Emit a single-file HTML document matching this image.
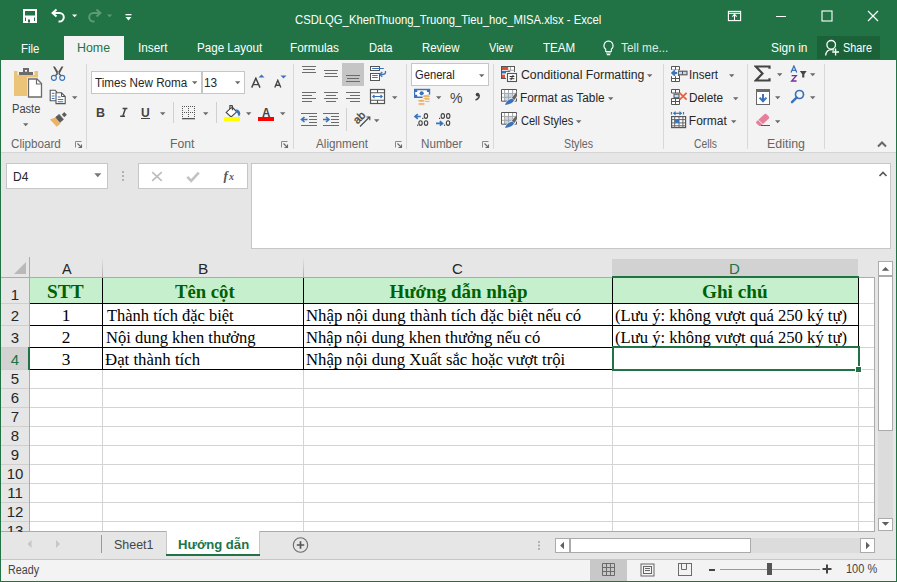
<!DOCTYPE html>
<html><head><meta charset="utf-8"><style>
html,body{margin:0;padding:0;overflow:hidden;background:#fff}
#w{position:relative;width:897px;height:582px;overflow:hidden;font-family:"Liberation Sans",sans-serif}
#w div,#w span,#w svg{position:absolute;box-sizing:border-box}
#w span{white-space:pre;line-height:normal}
</style></head><body><div id="w">
<div style="left:0px;top:0px;width:897px;height:582px;background:#217346"></div>
<div style="left:1px;top:60px;width:895px;height:92px;background:#f3f3f3"></div>
<div style="left:1px;top:152px;width:895px;height:1px;background:#d5d5d5"></div>
<div style="left:1px;top:153px;width:895px;height:104px;background:#e6e6e6"></div>
<div style="left:64px;top:36px;width:60px;height:24px;background:#f3f3f3"></div>
<div style="left:817px;top:36px;width:63px;height:23px;background:#1c6239"></div>
<span style="left:294.86px;top:13.34px;font-family:'Liberation Sans',sans-serif;font-size:12px;font-weight:normal;font-style:normal;color:#fff;transform:scaleX(0.9395);transform-origin:0 0;">CSDLQG_KhenThuong_Truong_Tieu_hoc_MISA.xlsx - Excel</span>
<svg style="left:22px;top:8px;" width="16" height="16" viewBox="0 0 16 16"><path d="M2 2 H14 V14 H2 Z" fill="none" stroke="#fff" stroke-width="2"/><rect x="2" y="7.5" width="12" height="2" fill="#fff"/><rect x="4" y="9" width="8" height="5" fill="#fff"/><rect x="6" y="11.5" width="2" height="3" fill="#217346"/></svg>
<svg style="left:50px;top:8px;" width="18" height="16" viewBox="0 0 18 16"><path d="M2.5 5 H9.5 A4.3 4.3 0 0 1 9.5 13.6 H8.5" fill="none" stroke="#fff" stroke-width="2"/><path d="M6.5 1.5 L2.6 5 L6.5 8.5" fill="none" stroke="#fff" stroke-width="2"/></svg>
<svg style="left:72px;top:14px;" width="6" height="4" viewBox="0 0 6 4"><path d="M0 0.5 H5.2 L2.6 3.3 Z" fill="#fff"/></svg>
<svg style="left:85px;top:8px;" width="18" height="16" viewBox="0 0 18 16"><path d="M15.5 5 H8.5 A4.3 4.3 0 0 0 8.5 13.6 H9.5" fill="none" stroke="#5d9b78" stroke-width="2"/><path d="M11.5 1.5 L15.4 5 L11.5 8.5" fill="none" stroke="#5d9b78" stroke-width="2"/></svg>
<svg style="left:107px;top:14px;" width="6" height="4" viewBox="0 0 6 4"><path d="M0 0.5 H5.2 L2.6 3.3 Z" fill="#5d9b78"/></svg>
<svg style="left:125px;top:13px;" width="7" height="9" viewBox="0 0 7 9"><rect x="0.5" y="1" width="6" height="1.3" fill="#fff"/><path d="M0.5 4 H6.5 L3.5 7.5 Z" fill="#fff"/></svg>
<svg style="left:727px;top:10px;" width="15" height="12" viewBox="0 0 15 12"><rect x="1.4" y="1.4" width="12.2" height="9.2" fill="none" stroke="#fff" stroke-width="1.1"/><path d="M1.4 3.3 H13.6" stroke="#fff" stroke-width="1.1"/><path d="M7.5 3.8 V10.6 M5.3 6.6 L7.5 4.4 L9.7 6.6" fill="none" stroke="#fff" stroke-width="1.1"/></svg>
<div style="left:776px;top:16px;width:10px;height:1px;background:#fff"></div>
<svg style="left:821px;top:10px;" width="12" height="12" viewBox="0 0 12 12"><rect x="1" y="1" width="10" height="10" fill="none" stroke="#fff" stroke-width="1.1"/></svg>
<svg style="left:867px;top:10px;" width="12" height="12" viewBox="0 0 12 12"><path d="M1 1 L11 11 M11 1 L1 11" stroke="#fff" stroke-width="1.2"/></svg>
<span style="left:21.46px;top:42.04px;font-family:'Liberation Sans',sans-serif;font-size:12px;font-weight:normal;font-style:normal;color:#fff;transform:scaleX(0.9462);transform-origin:0 0;">File</span>
<span style="left:77.37px;top:41.04px;font-family:'Liberation Sans',sans-serif;font-size:12px;font-weight:normal;font-style:normal;color:#217346;transform:scaleX(1.0328);transform-origin:0 0;">Home</span>
<span style="left:138.21px;top:41.04px;font-family:'Liberation Sans',sans-serif;font-size:12px;font-weight:normal;font-style:normal;color:#fff;transform:scaleX(0.9797);transform-origin:0 0;">Insert</span>
<span style="left:196.63px;top:41.04px;font-family:'Liberation Sans',sans-serif;font-size:12px;font-weight:normal;font-style:normal;color:#fff;transform:scaleX(0.9668);transform-origin:0 0;">Page Layout</span>
<span style="left:290.42px;top:41.04px;font-family:'Liberation Sans',sans-serif;font-size:12px;font-weight:normal;font-style:normal;color:#fff;transform:scaleX(0.9796);transform-origin:0 0;">Formulas</span>
<span style="left:368.67px;top:41.04px;font-family:'Liberation Sans',sans-serif;font-size:12px;font-weight:normal;font-style:normal;color:#fff;transform:scaleX(0.9254);transform-origin:0 0;">Data</span>
<span style="left:422.27px;top:41.04px;font-family:'Liberation Sans',sans-serif;font-size:12px;font-weight:normal;font-style:normal;color:#fff;transform:scaleX(0.9502);transform-origin:0 0;">Review</span>
<span style="left:488.60px;top:41.04px;font-family:'Liberation Sans',sans-serif;font-size:12px;font-weight:normal;font-style:normal;color:#fff;transform:scaleX(0.9161);transform-origin:0 0;">View</span>
<span style="left:542.59px;top:41.04px;font-family:'Liberation Sans',sans-serif;font-size:12px;font-weight:normal;font-style:normal;color:#fff;transform:scaleX(0.9629);transform-origin:0 0;">TEAM</span>
<span style="left:621.40px;top:41.04px;font-family:'Liberation Sans',sans-serif;font-size:12px;font-weight:normal;font-style:normal;color:#dfe8e2;transform:scaleX(0.9873);transform-origin:0 0;">Tell me...</span>
<span style="left:770.61px;top:41.04px;font-family:'Liberation Sans',sans-serif;font-size:12px;font-weight:normal;font-style:normal;color:#fff;transform:scaleX(0.9946);transform-origin:0 0;">Sign in</span>
<span style="left:842.50px;top:41.04px;font-family:'Liberation Sans',sans-serif;font-size:12px;font-weight:normal;font-style:normal;color:#fff;transform:scaleX(0.9032);transform-origin:0 0;">Share</span>
<svg style="left:602px;top:40px;" width="13" height="16" viewBox="0 0 13 16"><path d="M6.5 1 A4.6 4.6 0 0 1 9.3 9.2 V11.5 H3.7 V9.2 A4.6 4.6 0 0 1 6.5 1 Z" fill="none" stroke="#fff" stroke-width="1.1"/><path d="M4 13 H9 M4.8 14.6 H8.2" stroke="#fff" stroke-width="1.1"/></svg>
<svg style="left:823px;top:38px;" width="18" height="19" viewBox="0 0 18 19"><circle cx="8.2" cy="6.8" r="4.3" fill="none" stroke="#fff" stroke-width="1.3"/><path d="M2.6 17.5 C3 13.8 5.5 11.6 8.6 11.6 C9.6 11.6 10.5 11.8 11.3 12.2" fill="none" stroke="#fff" stroke-width="1.3"/><path d="M12.6 10.6 V17.4 M9.2 14 H16" stroke="#fff" stroke-width="1.3"/></svg>
<div style="left:86px;top:64px;width:1px;height:85px;background:#d8d8d8"></div>
<div style="left:293px;top:64px;width:1px;height:85px;background:#d8d8d8"></div>
<div style="left:406px;top:64px;width:1px;height:85px;background:#d8d8d8"></div>
<div style="left:493px;top:64px;width:1px;height:85px;background:#d8d8d8"></div>
<div style="left:663px;top:64px;width:1px;height:85px;background:#d8d8d8"></div>
<div style="left:747px;top:64px;width:1px;height:85px;background:#d8d8d8"></div>
<div style="left:824px;top:64px;width:1px;height:85px;background:#d8d8d8"></div>
<span style="left:10.81px;top:136.94px;font-family:'Liberation Sans',sans-serif;font-size:12px;font-weight:normal;font-style:normal;color:#666666;transform:scaleX(0.9684);transform-origin:0 0;">Clipboard</span>
<span style="left:170.39px;top:136.94px;font-family:'Liberation Sans',sans-serif;font-size:12px;font-weight:normal;font-style:normal;color:#666666;transform:scaleX(1.0175);transform-origin:0 0;">Font</span>
<span style="left:315.60px;top:136.94px;font-family:'Liberation Sans',sans-serif;font-size:12px;font-weight:normal;font-style:normal;color:#666666;transform:scaleX(0.9739);transform-origin:0 0;">Alignment</span>
<span style="left:421.43px;top:136.94px;font-family:'Liberation Sans',sans-serif;font-size:12px;font-weight:normal;font-style:normal;color:#666666;transform:scaleX(0.9716);transform-origin:0 0;">Number</span>
<span style="left:563.91px;top:136.94px;font-family:'Liberation Sans',sans-serif;font-size:12px;font-weight:normal;font-style:normal;color:#666666;transform:scaleX(0.8904);transform-origin:0 0;">Styles</span>
<span style="left:694.09px;top:136.94px;font-family:'Liberation Sans',sans-serif;font-size:12px;font-weight:normal;font-style:normal;color:#666666;transform:scaleX(0.8593);transform-origin:0 0;">Cells</span>
<span style="left:766.97px;top:136.94px;font-family:'Liberation Sans',sans-serif;font-size:12px;font-weight:normal;font-style:normal;color:#666666;transform:scaleX(1.0346);transform-origin:0 0;">Editing</span>
<svg style="left:75px;top:141px;" width="8" height="8" viewBox="0 0 8 8"><path d="M0.5 6.5 V0.5 H6.5" fill="none" stroke="#8a8a8a" stroke-width="1"/><path d="M2.5 2.5 L6.5 6.5 M3.5 6.5 H6.5 V3.5" fill="none" stroke="#6a6a6a" stroke-width="1.1"/></svg>
<svg style="left:281px;top:141px;" width="8" height="8" viewBox="0 0 8 8"><path d="M0.5 6.5 V0.5 H6.5" fill="none" stroke="#8a8a8a" stroke-width="1"/><path d="M2.5 2.5 L6.5 6.5 M3.5 6.5 H6.5 V3.5" fill="none" stroke="#6a6a6a" stroke-width="1.1"/></svg>
<svg style="left:395px;top:141px;" width="8" height="8" viewBox="0 0 8 8"><path d="M0.5 6.5 V0.5 H6.5" fill="none" stroke="#8a8a8a" stroke-width="1"/><path d="M2.5 2.5 L6.5 6.5 M3.5 6.5 H6.5 V3.5" fill="none" stroke="#6a6a6a" stroke-width="1.1"/></svg>
<svg style="left:482px;top:141px;" width="8" height="8" viewBox="0 0 8 8"><path d="M0.5 6.5 V0.5 H6.5" fill="none" stroke="#8a8a8a" stroke-width="1"/><path d="M2.5 2.5 L6.5 6.5 M3.5 6.5 H6.5 V3.5" fill="none" stroke="#6a6a6a" stroke-width="1.1"/></svg>
<svg style="left:877px;top:140px;" width="10" height="8" viewBox="0 0 10 8"><path d="M1 6.5 L5 2.5 L9 6.5" fill="none" stroke="#666" stroke-width="2"/></svg>
<svg style="left:13px;top:67px;" width="31" height="32" viewBox="0 0 31 32"><rect x="1" y="4" width="24" height="25" fill="#ebc47a"/><rect x="4.5" y="3" width="17" height="5" fill="#f3f3f3"/><rect x="6" y="5" width="14" height="3" fill="#6b6b6b"/><rect x="10" y="1" width="6" height="5" fill="#6b6b6b"/><rect x="12" y="3" width="2" height="1.6" fill="#fff"/><path d="M14 10.5 H24.5 L30 16 V31.5 H14 Z" fill="#f3f3f3"/><path d="M15.5 12 H24 L28.5 16.5 V30 H15.5 Z" fill="#fff" stroke="#6b6b6b" stroke-width="1.3"/><path d="M23.5 12 V17 H28.5" fill="none" stroke="#6b6b6b" stroke-width="1.2"/></svg>
<span style="left:12.08px;top:102.14px;font-family:'Liberation Sans',sans-serif;font-size:12px;font-weight:normal;font-style:normal;color:#444;transform:scaleX(0.9247);transform-origin:0 0;">Paste</span>
<svg style="left:22.5px;top:123px;" width="6" height="4" viewBox="0 0 6 4"><path d="M0 0.3 H5.4 L2.7 3.2 Z" fill="#6b6b6b"/></svg>
<svg style="left:49px;top:65px;" width="18" height="17" viewBox="0 0 18 17"><path d="M4 1.6 L5.9 1.6 L10 8.3 L8.2 9.6 Z M14.4 1.6 L12.5 1.6 L8.4 8.3 L10.2 9.6 Z" fill="#555"/><path d="M8.4 8.5 L6.2 11 M10 8.5 L12.2 11" stroke="#555" stroke-width="1.3"/><circle cx="4.9" cy="12.8" r="2.5" fill="none" stroke="#3a73b9" stroke-width="1.15"/><circle cx="13.2" cy="12.8" r="2.5" fill="none" stroke="#3a73b9" stroke-width="1.15"/></svg>
<svg style="left:49px;top:89px;" width="17" height="16" viewBox="0 0 17 16"><path d="M1.2 1.2 H6 L7.6 2.8 V11.7 H1.2 Z" fill="#fff" stroke="#555" stroke-width="1.1"/><path d="M2.8 4.3 H5.5 M2.8 7 H5.5 M2.8 9.5 H5.5" stroke="#3a73b9" stroke-width="1"/><path d="M7 3.8 H12.5 L16.2 7.5 V14.6 H7 Z" fill="#fff" stroke="#555" stroke-width="1.1"/><path d="M12.5 3.8 V7.5 H16.2" fill="none" stroke="#555" stroke-width="1"/><path d="M8.8 8 H11.5 M8.8 10.5 H14.2 M8.8 12.8 H14.2" stroke="#3a73b9" stroke-width="1.1"/></svg>
<svg style="left:72px;top:96px;" width="6" height="4" viewBox="0 0 6 4"><path d="M0 0.3 H5.4 L2.7 3.2 Z" fill="#6b6b6b"/></svg>
<svg style="left:49px;top:112px;" width="18" height="16" viewBox="0 0 18 16"><path d="M1 7.4 L7.5 5 L11.7 11.4 L7.7 14.8 Z" fill="#eab366"/><path d="M6.8 5.2 L10.2 2.4 L14.4 7.4 L11 10.2 Z" fill="#5a5a5a" stroke="#5a5a5a" stroke-width="0.8" stroke-linejoin="round"/><path d="M13.2 2.4 L15.4 0.6 L17.4 3 L15.2 4.8 Z" fill="#5a5a5a" stroke="#5a5a5a" stroke-width="0.8" stroke-linejoin="round"/></svg>
<div style="left:91px;top:71px;width:111px;height:23px;background:#fff;border:1px solid #c6c6c6"></div>
<div style="left:202px;top:71px;width:43px;height:23px;background:#fff;border:1px solid #c6c6c6"></div>
<span style="left:95.20px;top:76.14px;font-family:'Liberation Sans',sans-serif;font-size:12px;font-weight:normal;font-style:normal;color:#262626;transform:scaleX(0.9726);transform-origin:0 0;">Times New Roma</span>
<svg style="left:192px;top:81px;" width="6" height="4" viewBox="0 0 6 4"><path d="M0 0.3 H5.4 L2.7 3.2 Z" fill="#6b6b6b"/></svg>
<span style="left:203.64px;top:76.14px;font-family:'Liberation Sans',sans-serif;font-size:12px;font-weight:normal;font-style:normal;color:#262626;transform:scaleX(0.9862);transform-origin:0 0;">13</span>
<svg style="left:235px;top:81px;" width="6" height="4" viewBox="0 0 6 4"><path d="M0 0.3 H5.4 L2.7 3.2 Z" fill="#6b6b6b"/></svg>
<svg style="left:250px;top:77px;" width="12" height="12" viewBox="0 0 12 12"><path d="M1.7 10.6 L5.85 1.2 L10 10.6 M3.3 7.6 H8.4" fill="none" stroke="#444" stroke-width="1.45"/></svg>
<svg style="left:258px;top:74px;" width="7" height="4" viewBox="0 0 7 4"><path d="M0.5 3.5 L3.5 0.5 L6.5 3.5 Z" fill="#3a73b9"/></svg>
<svg style="left:273px;top:79px;" width="10" height="10" viewBox="0 0 10 10"><path d="M1.8 8.6 L4.8 1.3 L7.8 8.6 M2.9 6.2 H6.7" fill="none" stroke="#444" stroke-width="1.35"/></svg>
<svg style="left:280px;top:75px;" width="7" height="4" viewBox="0 0 7 4"><path d="M0.5 0.5 H6.5 L3.5 3.5 Z" fill="#3a73b9"/></svg>
<span style="left:96.23px;top:105.03px;font-family:'Liberation Sans',sans-serif;font-size:13px;font-weight:bold;font-style:normal;color:#444;transform:scaleX(0.9562);transform-origin:0 0;">B</span>
<svg style="left:119px;top:107px;" width="10" height="11" viewBox="0 0 10 11"><path d="M3.6 1.6 H8.4 M1.2 9.2 H6 M6.4 1.6 L3.8 9.2" stroke="#444" stroke-width="1.5"/></svg>
<span style="left:141.01px;top:105.03px;font-family:'Liberation Sans',sans-serif;font-size:13px;font-weight:bold;font-style:normal;color:#444;transform:scaleX(0.9309);transform-origin:0 0;">U</span>
<div style="left:141px;top:118px;width:9px;height:1px;background:#444"></div>
<svg style="left:160px;top:112px;" width="6" height="4" viewBox="0 0 6 4"><path d="M0 0.3 H5.4 L2.7 3.2 Z" fill="#6b6b6b"/></svg>
<div style="left:173px;top:102px;width:1px;height:21px;background:#d0d0d0"></div>
<svg style="left:181px;top:105px;" width="15" height="15" viewBox="0 0 15 15"><rect x="1" y="1" width="1" height="1" fill="#555"/><rect x="3" y="1" width="1" height="1" fill="#555"/><rect x="5" y="1" width="1" height="1" fill="#555"/><rect x="7" y="1" width="1" height="1" fill="#555"/><rect x="9" y="1" width="1" height="1" fill="#555"/><rect x="11" y="1" width="1" height="1" fill="#555"/><rect x="13" y="1" width="1" height="1" fill="#555"/><rect x="1" y="3" width="1" height="1" fill="#555"/><rect x="7" y="3" width="1" height="1" fill="#555"/><rect x="13" y="3" width="1" height="1" fill="#555"/><rect x="1" y="5" width="1" height="1" fill="#555"/><rect x="7" y="5" width="1" height="1" fill="#555"/><rect x="13" y="5" width="1" height="1" fill="#555"/><rect x="1" y="7" width="1" height="1" fill="#555"/><rect x="3" y="7" width="1" height="1" fill="#555"/><rect x="5" y="7" width="1" height="1" fill="#555"/><rect x="7" y="7" width="1" height="1" fill="#555"/><rect x="9" y="7" width="1" height="1" fill="#555"/><rect x="11" y="7" width="1" height="1" fill="#555"/><rect x="13" y="7" width="1" height="1" fill="#555"/><rect x="1" y="9" width="1" height="1" fill="#555"/><rect x="7" y="9" width="1" height="1" fill="#555"/><rect x="13" y="9" width="1" height="1" fill="#555"/><rect x="1" y="11" width="1" height="1" fill="#555"/><rect x="7" y="11" width="1" height="1" fill="#555"/><rect x="13" y="11" width="1" height="1" fill="#555"/><rect x="1" y="13" width="13" height="1.3" fill="#555"/></svg>
<svg style="left:203px;top:112px;" width="6" height="4" viewBox="0 0 6 4"><path d="M0 0.3 H5.4 L2.7 3.2 Z" fill="#6b6b6b"/></svg>
<div style="left:216px;top:102px;width:1px;height:21px;background:#d0d0d0"></div>
<svg style="left:223px;top:104px;" width="18" height="18" viewBox="0 0 18 18"><path d="M6.9 4.9 L3.2 8.4 L8.1 12.9 L13.7 7.8 L9.4 3.3 Z" fill="#fff" stroke="#444" stroke-width="1.1"/><path d="M6.9 5 V1.6 H9 L9.8 2.4 M9.4 2 V6.2" fill="none" stroke="#444" stroke-width="1.1"/><path d="M13.3 5.3 C15.5 5.6 17.3 7.3 17.3 9.5 C17.3 10.7 16.6 11.8 15.6 12.6 C15.3 10.6 14.8 9 13 8 Z" fill="#3a73b9"/><rect x="1" y="13" width="16" height="4" fill="#ffff00"/></svg>
<svg style="left:246px;top:112px;" width="6" height="4" viewBox="0 0 6 4"><path d="M0 0.3 H5.4 L2.7 3.2 Z" fill="#6b6b6b"/></svg>
<span style="left:262.20px;top:104.83px;font-family:'Liberation Sans',sans-serif;font-size:13px;font-weight:bold;font-style:normal;color:#444;transform:scaleX(0.8889);transform-origin:0 0;">A</span>
<div style="left:258px;top:117px;width:16px;height:4px;background:#ff0000"></div>
<svg style="left:280px;top:112px;" width="6" height="4" viewBox="0 0 6 4"><path d="M0 0.3 H5.4 L2.7 3.2 Z" fill="#6b6b6b"/></svg>
<div style="left:302px;top:66px;width:14px;height:1px;background:#6b6b6b"></div>
<div style="left:303px;top:69px;width:12px;height:1px;background:#6b6b6b"></div>
<div style="left:302px;top:72px;width:14px;height:1px;background:#6b6b6b"></div>
<div style="left:324px;top:70px;width:14px;height:1px;background:#6b6b6b"></div>
<div style="left:325px;top:73px;width:12px;height:1px;background:#6b6b6b"></div>
<div style="left:324px;top:76px;width:14px;height:1px;background:#6b6b6b"></div>
<div style="left:342px;top:63px;width:22px;height:23px;background:#c5c5c5"></div>
<div style="left:346px;top:75px;width:14px;height:1px;background:#6b6b6b"></div>
<div style="left:347px;top:78px;width:12px;height:1px;background:#6b6b6b"></div>
<div style="left:346px;top:81px;width:14px;height:1px;background:#6b6b6b"></div>
<div style="left:302px;top:92px;width:14px;height:1px;background:#6b6b6b"></div>
<div style="left:302px;top:95px;width:10px;height:1px;background:#6b6b6b"></div>
<div style="left:302px;top:98px;width:14px;height:1px;background:#6b6b6b"></div>
<div style="left:302px;top:101px;width:10px;height:1px;background:#6b6b6b"></div>
<div style="left:324px;top:92px;width:14px;height:1px;background:#6b6b6b"></div>
<div style="left:326px;top:95px;width:10px;height:1px;background:#6b6b6b"></div>
<div style="left:324px;top:98px;width:14px;height:1px;background:#6b6b6b"></div>
<div style="left:326px;top:101px;width:10px;height:1px;background:#6b6b6b"></div>
<div style="left:346px;top:92px;width:14px;height:1px;background:#6b6b6b"></div>
<div style="left:350px;top:95px;width:10px;height:1px;background:#6b6b6b"></div>
<div style="left:346px;top:98px;width:14px;height:1px;background:#6b6b6b"></div>
<div style="left:350px;top:101px;width:10px;height:1px;background:#6b6b6b"></div>
<svg style="left:369px;top:65px;" width="18" height="17" viewBox="0 0 18 17"><rect x="1.5" y="1.5" width="9" height="4" fill="#fff" stroke="#555" stroke-width="1"/><path d="M3.2 3.5 H14.8" stroke="#3a73b9" stroke-width="1"/><rect x="1.5" y="8.5" width="9" height="7" fill="#fff" stroke="#555" stroke-width="1"/><path d="M3.2 10.5 H8.7 M3.2 12.5 H8.7" stroke="#3a73b9" stroke-width="1"/><path d="M16.5 6.1 V7.6 C16.5 8.9 15.3 9.5 13 9.5 H11.2" fill="none" stroke="#3a73b9" stroke-width="1.3"/><path d="M13.3 7.1 L10.7 9.5 L13.3 11.8" fill="none" stroke="#3a73b9" stroke-width="1.3"/></svg>
<svg style="left:369px;top:88px;" width="17" height="17" viewBox="0 0 17 17"><rect x="1.5" y="1.5" width="14" height="14" fill="#fff" stroke="#555" stroke-width="1.2"/><path d="M1.5 4.8 H15.5 M1.5 12.2 H15.5 M8.5 1.5 V4.8 M8.5 12.2 V15.5" stroke="#555" stroke-width="1.1"/><path d="M4 8.5 H13" stroke="#3a73b9" stroke-width="1.1"/><path d="M5.5 7 L3.8 8.5 L5.5 10 M11.5 7 L13.2 8.5 L11.5 10" fill="none" stroke="#3a73b9" stroke-width="1.1"/></svg>
<svg style="left:392px;top:96px;" width="6" height="4" viewBox="0 0 6 4"><path d="M0 0.3 H5.4 L2.7 3.2 Z" fill="#6b6b6b"/></svg>
<div style="left:301px;top:113px;width:16px;height:1px;background:#6b6b6b"></div>
<div style="left:309px;top:116px;width:8px;height:1px;background:#6b6b6b"></div>
<div style="left:309px;top:119px;width:8px;height:1px;background:#6b6b6b"></div>
<div style="left:309px;top:122px;width:8px;height:1px;background:#6b6b6b"></div>
<div style="left:301px;top:125px;width:16px;height:1px;background:#6b6b6b"></div>
<svg style="left:300px;top:116px;" width="8" height="7" viewBox="0 0 8 7"><path d="M7.5 3.5 H2 M4.5 1 L1.5 3.5 L4.5 6" fill="none" stroke="#3a73b9" stroke-width="1.6"/></svg>
<div style="left:323px;top:113px;width:16px;height:1px;background:#6b6b6b"></div>
<div style="left:331px;top:116px;width:8px;height:1px;background:#6b6b6b"></div>
<div style="left:331px;top:119px;width:8px;height:1px;background:#6b6b6b"></div>
<div style="left:331px;top:122px;width:8px;height:1px;background:#6b6b6b"></div>
<div style="left:323px;top:125px;width:16px;height:1px;background:#6b6b6b"></div>
<svg style="left:322px;top:116px;" width="9" height="7" viewBox="0 0 9 7"><path d="M1 3.5 H6.5 M4 1 L7 3.5 L4 6" fill="none" stroke="#3a73b9" stroke-width="1.6"/></svg>
<div style="left:346px;top:108px;width:1px;height:23px;background:#d0d0d0"></div>
<svg style="left:352px;top:111px;" width="20" height="17" viewBox="0 0 20 17"><text x="0" y="0" transform="translate(5.5,13.5) rotate(-45)" font-family="Liberation Sans" font-size="11" fill="#444" stroke="#444" stroke-width="0.35">ab</text><path d="M8 15.5 L17.5 6" stroke="#444" stroke-width="1.1"/><path d="M14.5 6 H17.8 V9.3" fill="none" stroke="#444" stroke-width="1.1"/></svg>
<svg style="left:374px;top:119px;" width="6" height="4" viewBox="0 0 6 4"><path d="M0 0.3 H5.4 L2.7 3.2 Z" fill="#6b6b6b"/></svg>
<div style="left:411px;top:63px;width:78px;height:23px;background:#fff;border:1px solid #c6c6c6"></div>
<span style="left:414.86px;top:67.94px;font-family:'Liberation Sans',sans-serif;font-size:12px;font-weight:normal;font-style:normal;color:#262626;transform:scaleX(0.9325);transform-origin:0 0;">General</span>
<svg style="left:479px;top:74px;" width="6" height="4" viewBox="0 0 6 4"><path d="M0 0.3 H5.4 L2.7 3.2 Z" fill="#6b6b6b"/></svg>
<svg style="left:413px;top:88px;" width="18" height="20" viewBox="0 0 18 20"><rect x="1" y="0.8" width="16.2" height="9.2" fill="#3a73b9"/><path d="M2.2 4 H4.2 V2.2 H13.9 V4 H15.8 V6.8 H13.9 V8.6 H4.2 V6.8 H2.2 Z" fill="#fff"/><circle cx="8.7" cy="5.3" r="2.1" fill="#3a73b9"/><rect x="9.6" y="6.6" width="8.4" height="8" fill="#f3f3f3"/><rect x="4.2" y="11" width="8" height="7" fill="#f3f3f3"/><ellipse cx="13.4" cy="8.2" rx="3.4" ry="1.2" fill="#e9b568"/><rect x="10.6" y="10.1" width="6" height="0.9" fill="#e9b568"/><rect x="12" y="11.2" width="4.6" height="0.9" fill="#e9b568"/><rect x="12" y="13" width="4.6" height="0.9" fill="#e9b568"/><ellipse cx="8.4" cy="12.8" rx="3.3" ry="1.15" fill="#e9b568"/><rect x="5.6" y="15" width="5.8" height="0.9" fill="#e9b568"/><rect x="5.6" y="16.2" width="5.8" height="0.9" fill="#e9b568"/></svg>
<svg style="left:436px;top:96px;" width="6" height="4" viewBox="0 0 6 4"><path d="M0 0.3 H5.4 L2.7 3.2 Z" fill="#6b6b6b"/></svg>
<span style="left:450.44px;top:89.42px;font-family:'Liberation Sans',sans-serif;font-size:15px;font-weight:normal;font-style:normal;color:#444;transform:scaleX(0.9415);transform-origin:0 0;">%</span>
<svg style="left:410px;top:110px;" width="44" height="18" viewBox="0 0 44 18"><rect x="12.2" y="7.8" width="1.2" height="1.2" fill="#444"/><ellipse cx="15.9" cy="6" rx="1.7" ry="2.35" fill="none" stroke="#444" stroke-width="1.1"/><rect x="7" y="14.6" width="1.2" height="1.2" fill="#444"/><ellipse cx="10.55" cy="13.05" rx="1.7" ry="2.35" fill="none" stroke="#444" stroke-width="1.1"/><ellipse cx="16.05" cy="13.05" rx="1.7" ry="2.35" fill="none" stroke="#444" stroke-width="1.1"/><rect x="29" y="7.8" width="1.2" height="1.2" fill="#444"/><ellipse cx="32.8" cy="6" rx="1.7" ry="2.35" fill="none" stroke="#444" stroke-width="1.1"/><ellipse cx="38.2" cy="6" rx="1.7" ry="2.35" fill="none" stroke="#444" stroke-width="1.1"/><rect x="33.9" y="14.6" width="1.2" height="1.2" fill="#444"/><ellipse cx="38.05" cy="13.05" rx="1.7" ry="2.35" fill="none" stroke="#444" stroke-width="1.1"/><path d="M10.8 6.5 H5.5 M7.8 4.2 L5 6.5 L7.8 8.8" fill="none" stroke="#3a73b9" stroke-width="1.6"/><path d="M26 13.4 H32 M29.8 11.1 L32.6 13.4 L29.8 15.7" fill="none" stroke="#3a73b9" stroke-width="1.6"/></svg>
<svg style="left:474px;top:92px;" width="7" height="9" viewBox="0 0 7 9"><circle cx="3.6" cy="2.6" r="1.9" fill="#444"/><path d="M5.2 3 C5.4 5.5 4 7.2 1.5 8" fill="none" stroke="#444" stroke-width="1.5"/></svg>
<svg style="left:500px;top:65px;" width="19" height="18" viewBox="0 0 19 18"><rect x="1.5" y="1.5" width="13" height="12" fill="#fff" stroke="#555" stroke-width="1"/><rect x="2" y="2" width="6.2" height="3" fill="#e4502a"/><path d="M10.5 2 V5.2 M8 5.3 H14.5" stroke="#a6a6a6" stroke-width="1"/><rect x="2" y="5.8" width="8.2" height="2.7" fill="#3a73b9"/><rect x="2" y="9.6" width="3" height="3.4" fill="#e4502a"/><rect x="6" y="7" width="12.5" height="11" fill="#f3f3f3"/><rect x="7.5" y="8.5" width="9" height="8" fill="#fff" stroke="#555" stroke-width="1.1"/><path d="M9.6 11.5 H14.4 M9.6 13.7 H14.4 M13.2 10 L10.8 15.2" stroke="#333" stroke-width="1"/></svg>
<span style="left:520.77px;top:67.94px;font-family:'Liberation Sans',sans-serif;font-size:12px;font-weight:normal;font-style:normal;color:#262626;transform:scaleX(1.0219);transform-origin:0 0;">Conditional Formatting</span>
<svg style="left:647px;top:74px;" width="6" height="4" viewBox="0 0 6 4"><path d="M0 0.3 H5.4 L2.7 3.2 Z" fill="#6b6b6b"/></svg>
<svg style="left:500px;top:88px;" width="19" height="19" viewBox="0 0 19 19"><rect x="1.5" y="1.5" width="15" height="12" fill="#fff"/><rect x="4.8" y="5.6" width="7.6" height="7.2" fill="#c5d9f1"/><path d="M4.6 1.5 V13.2 M8.5 1.5 V13.2 M12.6 1.5 V13.2 M1.5 5.4 H16.5 M1.5 9.3 H16.5" stroke="#a6a6a6" stroke-width="1"/><path d="M1.5 13.2 V1.5 H16.5 V13.2 H1.5" fill="none" stroke="#555" stroke-width="1"/><path d="M17.6 2.6 L11 10 L14.6 13 L17.6 9 Z" fill="#f3f3f3"/><path d="M4 18 C5 15 7.5 11 11.4 10.2 C13.5 9.8 15.5 11.5 14.6 13.4 C13.5 15.8 9 17.4 4 18 Z" fill="#f3f3f3"/><path d="M17 3.5 L11.8 9.8 L14.5 12 L17 8 Z" fill="#666"/><path d="M5 17 C6 14.5 8 11.5 11.6 10.8 C13 10.6 14.3 11.6 13.8 12.8 C12.8 15 9 16.5 5 17 Z" fill="#3a73b9"/></svg>
<span style="left:519.81px;top:90.94px;font-family:'Liberation Sans',sans-serif;font-size:12px;font-weight:normal;font-style:normal;color:#262626;transform:scaleX(0.9859);transform-origin:0 0;">Format as Table</span>
<svg style="left:608px;top:97px;" width="6" height="4" viewBox="0 0 6 4"><path d="M0 0.3 H5.4 L2.7 3.2 Z" fill="#6b6b6b"/></svg>
<svg style="left:500px;top:111px;" width="19" height="19" viewBox="0 0 19 19"><rect x="1.5" y="1.5" width="15" height="12" fill="#fff"/><rect x="4.8" y="5.6" width="7.6" height="7.2" fill="#c5d9f1"/><path d="M4.6 1.5 V13.2 M8.5 1.5 V13.2 M12.6 1.5 V13.2 M1.5 5.4 H16.5 M1.5 9.3 H16.5" stroke="#a6a6a6" stroke-width="1"/><path d="M1.5 13.2 V1.5 H16.5 V13.2 H1.5" fill="none" stroke="#555" stroke-width="1"/><path d="M17.6 2.6 L11 10 L14.6 13 L17.6 9 Z" fill="#f3f3f3"/><path d="M4 18 C5 15 7.5 11 11.4 10.2 C13.5 9.8 15.5 11.5 14.6 13.4 C13.5 15.8 9 17.4 4 18 Z" fill="#f3f3f3"/><path d="M17 3.5 L11.8 9.8 L14.5 12 L17 8 Z" fill="#666"/><path d="M5 17 C6 14.5 8 11.5 11.6 10.8 C13 10.6 14.3 11.6 13.8 12.8 C12.8 15 9 16.5 5 17 Z" fill="#3a73b9"/></svg>
<span style="left:520.86px;top:113.84px;font-family:'Liberation Sans',sans-serif;font-size:12px;font-weight:normal;font-style:normal;color:#262626;transform:scaleX(0.9205);transform-origin:0 0;">Cell Styles</span>
<svg style="left:576px;top:120px;" width="6" height="4" viewBox="0 0 6 4"><path d="M0 0.3 H5.4 L2.7 3.2 Z" fill="#6b6b6b"/></svg>
<svg style="left:670px;top:65px;" width="18" height="18" viewBox="0 0 18 18"><path d="M1.5 1.5 H9.5 V5 H1.5 Z M1.5 10.5 H9.5 V16.5 H1.5 Z M5.5 1.5 V5 M5.5 10.5 V16.5 M1.5 13.5 H9.5" fill="#fff" stroke="#555" stroke-width="1"/><rect x="8.3" y="6.2" width="8.7" height="3.6" fill="#c5d9f1" stroke="#555" stroke-width="1.1"/><path d="M12.5 6.2 V9.8" stroke="#555"/><rect x="0.5" y="4.8" width="7.5" height="6.4" fill="#f3f3f3"/><path d="M7.2 8 H2.8 M5 5.4 L2.2 8 L5 10.6" fill="none" stroke="#3a73b9" stroke-width="1.9"/></svg>
<span style="left:688.84px;top:67.94px;font-family:'Liberation Sans',sans-serif;font-size:12px;font-weight:normal;font-style:normal;color:#262626;transform:scaleX(0.9661);transform-origin:0 0;">Insert</span>
<svg style="left:729px;top:74px;" width="6" height="4" viewBox="0 0 6 4"><path d="M0 0.3 H5.4 L2.7 3.2 Z" fill="#6b6b6b"/></svg>
<svg style="left:670px;top:88px;" width="18" height="18" viewBox="0 0 18 18"><path d="M1.5 1.5 H9.5 V5 H1.5 Z M1.5 10.5 H9.5 V16.5 H1.5 Z M5.5 1.5 V5 M5.5 10.5 V16.5 M1.5 13.5 H9.5" fill="#fff" stroke="#555" stroke-width="1"/><rect x="4" y="6.2" width="5" height="3.6" fill="#c5d9f1" stroke="#555" stroke-width="1"/><path d="M9.6 4.8 L16.6 11.6 M16.6 4.8 L9.6 11.6" stroke="#e4623f" stroke-width="1.8"/></svg>
<span style="left:688.83px;top:90.74px;font-family:'Liberation Sans',sans-serif;font-size:12px;font-weight:normal;font-style:normal;color:#262626;transform:scaleX(0.9822);transform-origin:0 0;">Delete</span>
<svg style="left:733px;top:97px;" width="6" height="4" viewBox="0 0 6 4"><path d="M0 0.3 H5.4 L2.7 3.2 Z" fill="#6b6b6b"/></svg>
<svg style="left:670px;top:111px;" width="18" height="18" viewBox="0 0 18 18"><path d="M1.5 1 V3.6 M13.5 1 V3.6" stroke="#3a73b9" stroke-width="1.2"/><path d="M3.6 2.3 H11.4" stroke="#3a73b9" stroke-width="1.2"/><path d="M5.3 0.6 L3.3 2.3 L5.3 4 Z M9.7 0.6 L11.7 2.3 L9.7 4 Z" fill="#3a73b9" stroke="#3a73b9" stroke-width="0.6"/><rect x="1.6" y="5.6" width="14" height="11" fill="#fff" stroke="#555" stroke-width="1.2"/><path d="M4.7 5.6 V16.6 M9 5.6 V16.6 M12.9 5.6 V16.6 M1.6 8.6 H15.6 M1.6 11.9 H15.6 M1.6 14.8 H15.6" stroke="#666" stroke-width="1"/><rect x="4.7" y="8.6" width="4.3" height="3.3" fill="#3a73b9"/></svg>
<span style="left:688.81px;top:113.54px;font-family:'Liberation Sans',sans-serif;font-size:12px;font-weight:normal;font-style:normal;color:#262626;">Format</span>
<svg style="left:731px;top:120px;" width="6" height="4" viewBox="0 0 6 4"><path d="M0 0.3 H5.4 L2.7 3.2 Z" fill="#6b6b6b"/></svg>
<svg style="left:754px;top:65px;" width="17" height="17" viewBox="0 0 17 17"><path d="M15.5 3.8 V1.5 H1.8 L8.5 8.5 L1.8 15.5 H15.5 V13.2" fill="none" stroke="#444" stroke-width="2.2"/></svg>
<svg style="left:777px;top:73px;" width="6" height="4" viewBox="0 0 6 4"><path d="M0 0.3 H5.4 L2.7 3.2 Z" fill="#6b6b6b"/></svg>
<svg style="left:790px;top:65px;" width="18" height="18" viewBox="0 0 18 18"><path d="M1 7.6 L3.9 1 L6.8 7.6 M2.1 5.4 H5.7" fill="none" stroke="#3a73b9" stroke-width="1.3"/><path d="M1.6 10.6 H6.3 L1.6 16 H6.6" fill="none" stroke="#7030a0" stroke-width="1.3"/><path d="M9.8 6 H16.7 L14.3 9.2 V12.6 H12.2 V9.2 Z" fill="#444"/></svg>
<svg style="left:810px;top:73px;" width="6" height="4" viewBox="0 0 6 4"><path d="M0 0.3 H5.4 L2.7 3.2 Z" fill="#6b6b6b"/></svg>
<svg style="left:755px;top:88px;" width="16" height="18" viewBox="0 0 16 18"><rect x="1.5" y="1.5" width="13" height="15" fill="#fff" stroke="#666" stroke-width="1"/><rect x="1" y="1" width="14" height="3" fill="#6b6b6b"/><path d="M8 6 V13" stroke="#3a73b9" stroke-width="2"/><path d="M4.6 9.6 L8 13.2 L11.4 9.6" fill="none" stroke="#3a73b9" stroke-width="2"/></svg>
<svg style="left:775px;top:96px;" width="6" height="4" viewBox="0 0 6 4"><path d="M0 0.3 H5.4 L2.7 3.2 Z" fill="#6b6b6b"/></svg>
<svg style="left:790px;top:89px;" width="16" height="15" viewBox="0 0 16 15"><circle cx="9.5" cy="5.5" r="4" fill="none" stroke="#3a73b9" stroke-width="1.7"/><path d="M6.6 8.6 L2 13.2" stroke="#3a73b9" stroke-width="2.4" stroke-linecap="round"/></svg>
<svg style="left:810px;top:96px;" width="6" height="4" viewBox="0 0 6 4"><path d="M0 0.3 H5.4 L2.7 3.2 Z" fill="#6b6b6b"/></svg>
<svg style="left:755px;top:112px;" width="16" height="16" viewBox="0 0 16 16"><path d="M1.5 9.5 L9 2.5 C10 1.6 11 1.6 11.8 2.4 L13.6 4.2 C14.4 5 14.4 6 13.6 6.8 L6.5 13.5 C5.5 14.3 4.5 14.3 3.7 13.5 L1.6 11.4 C0.8 10.6 0.8 10.2 1.5 9.5 Z" fill="#e57f9c"/><path d="M3.2 8 L8 12.6" stroke="#f3f3f3" stroke-width="0.9"/><path d="M6 13.5 H15" stroke="#555" stroke-width="1"/></svg>
<svg style="left:775px;top:120px;" width="6" height="4" viewBox="0 0 6 4"><path d="M0 0.3 H5.4 L2.7 3.2 Z" fill="#6b6b6b"/></svg>
<div style="left:6px;top:163px;width:102px;height:26px;background:#fff;border:1px solid #c6c6c6"></div>
<div style="left:138px;top:163px;width:110px;height:26px;background:#fff;border:1px solid #c6c6c6"></div>
<div style="left:251px;top:163px;width:640px;height:86px;background:#fff;border:1px solid #c6c6c6"></div>
<span style="left:13.00px;top:170.14px;font-family:'Liberation Sans',sans-serif;font-size:12px;font-weight:normal;font-style:normal;color:#262626;">D4</span>
<svg style="left:94px;top:173px;" width="8" height="5" viewBox="0 0 8 5"><path d="M0.3 0.3 H7.3 L3.8 4.2 Z" fill="#777"/></svg>
<svg style="left:121px;top:170px;" width="4" height="12" viewBox="0 0 4 12"><circle cx="2" cy="2" r="0.9" fill="#9a9a9a"/><circle cx="2" cy="6" r="0.9" fill="#9a9a9a"/><circle cx="2" cy="10" r="0.9" fill="#9a9a9a"/></svg>
<svg style="left:151px;top:171px;" width="12" height="11" viewBox="0 0 12 11"><path d="M1.2 1.2 L10.8 9.8 M10.8 1.2 L1.2 9.8" stroke="#bdbdbd" stroke-width="1.7"/></svg>
<svg style="left:186px;top:171px;" width="14" height="12" viewBox="0 0 14 12"><path d="M1.3 5.8 L5.2 9.8 L12.8 1.6" fill="none" stroke="#c2c2c2" stroke-width="2.6"/></svg>
<span style="left:223.50px;top:168.42px;font-family:'Liberation Serif',sans-serif;font-size:13px;font-weight:bold;font-style:italic;color:#555;">f</span>
<span style="left:229.00px;top:171.09px;font-family:'Liberation Serif',sans-serif;font-size:10px;font-weight:bold;font-style:italic;color:#555;">x</span>
<svg style="left:878px;top:170px;" width="10" height="8" viewBox="0 0 10 8"><path d="M1.5 6 L5 2.5 L8.5 6" fill="none" stroke="#555" stroke-width="1.6"/></svg>
<div style="left:1px;top:257px;width:895px;height:275px;background:#e6e6e6"></div>
<div style="left:612px;top:259px;width:246px;height:18px;background:#d2d2d2"></div>
<div style="left:30px;top:278px;width:844px;height:253px;background:#fff"></div>
<div style="left:1px;top:347px;width:28px;height:22px;background:#d2d2d2"></div>
<div style="left:30px;top:303px;width:844px;height:1px;background:#d4d4d4"></div>
<div style="left:30px;top:325px;width:844px;height:1px;background:#d4d4d4"></div>
<div style="left:30px;top:347px;width:844px;height:1px;background:#d4d4d4"></div>
<div style="left:30px;top:369px;width:844px;height:1px;background:#d4d4d4"></div>
<div style="left:30px;top:388px;width:844px;height:1px;background:#d4d4d4"></div>
<div style="left:30px;top:407px;width:844px;height:1px;background:#d4d4d4"></div>
<div style="left:30px;top:426px;width:844px;height:1px;background:#d4d4d4"></div>
<div style="left:30px;top:445px;width:844px;height:1px;background:#d4d4d4"></div>
<div style="left:30px;top:464px;width:844px;height:1px;background:#d4d4d4"></div>
<div style="left:30px;top:483px;width:844px;height:1px;background:#d4d4d4"></div>
<div style="left:30px;top:502px;width:844px;height:1px;background:#d4d4d4"></div>
<div style="left:30px;top:521px;width:844px;height:1px;background:#d4d4d4"></div>
<div style="left:102px;top:278px;width:1px;height:253px;background:#d4d4d4"></div>
<div style="left:303px;top:278px;width:1px;height:253px;background:#d4d4d4"></div>
<div style="left:612px;top:278px;width:1px;height:253px;background:#d4d4d4"></div>
<div style="left:858px;top:278px;width:1px;height:253px;background:#d4d4d4"></div>
<div style="left:30px;top:278px;width:828px;height:25px;background:#c6efce"></div>
<div style="left:30px;top:303px;width:829px;height:1px;background:#000"></div>
<div style="left:30px;top:325px;width:829px;height:1px;background:#000"></div>
<div style="left:30px;top:347px;width:829px;height:1px;background:#000"></div>
<div style="left:30px;top:369px;width:829px;height:1px;background:#000"></div>
<div style="left:102px;top:278px;width:1px;height:92px;background:#000"></div>
<div style="left:303px;top:278px;width:1px;height:92px;background:#000"></div>
<div style="left:612px;top:278px;width:1px;height:92px;background:#000"></div>
<div style="left:858px;top:278px;width:1px;height:92px;background:#000"></div>
<div style="left:874px;top:277px;width:1px;height:255px;background:#ababab"></div>
<div style="left:1px;top:531px;width:874px;height:1px;background:#ababab"></div>
<div style="left:1px;top:277px;width:873px;height:1px;background:#ababab"></div>
<div style="left:29px;top:257px;width:1px;height:274px;background:#ababab"></div>
<div style="left:1px;top:303px;width:28px;height:1px;background:#cfcfcf"></div>
<div style="left:1px;top:325px;width:28px;height:1px;background:#cfcfcf"></div>
<div style="left:1px;top:347px;width:28px;height:1px;background:#cfcfcf"></div>
<div style="left:1px;top:369px;width:28px;height:1px;background:#cfcfcf"></div>
<div style="left:1px;top:388px;width:28px;height:1px;background:#cfcfcf"></div>
<div style="left:1px;top:407px;width:28px;height:1px;background:#cfcfcf"></div>
<div style="left:1px;top:426px;width:28px;height:1px;background:#cfcfcf"></div>
<div style="left:1px;top:445px;width:28px;height:1px;background:#cfcfcf"></div>
<div style="left:1px;top:464px;width:28px;height:1px;background:#cfcfcf"></div>
<div style="left:1px;top:483px;width:28px;height:1px;background:#cfcfcf"></div>
<div style="left:1px;top:502px;width:28px;height:1px;background:#cfcfcf"></div>
<div style="left:1px;top:521px;width:28px;height:1px;background:#cfcfcf"></div>
<div style="left:102px;top:257px;width:1px;height:20px;background:linear-gradient(#e6e6e6,#b0b0b0)"></div>
<div style="left:303px;top:257px;width:1px;height:20px;background:linear-gradient(#e6e6e6,#b0b0b0)"></div>
<div style="left:612px;top:276px;width:247px;height:2px;background:#217346"></div>
<div style="left:28px;top:347px;width:2px;height:23px;background:#217346"></div>
<div style="left:612px;top:346px;width:248px;height:25px;border:2px solid #217346"></div>
<div style="left:855px;top:366px;width:7px;height:7px;background:#217346;border:1px solid #fff"></div>
<svg style="left:14px;top:262px;" width="13" height="13" viewBox="0 0 13 13"><path d="M12 0 L12 12 L0 12 Z" fill="#b9b9b9"/></svg>
<span style="left:61.77px;top:260.32px;font-family:'Liberation Sans',sans-serif;font-size:15px;font-weight:normal;font-style:normal;color:#262626;transform:scaleX(0.9639);transform-origin:0 0;">A</span>
<span style="left:197.56px;top:260.32px;font-family:'Liberation Sans',sans-serif;font-size:15px;font-weight:normal;font-style:normal;color:#262626;transform:scaleX(1.0299);transform-origin:0 0;">B</span>
<span style="left:452.00px;top:260.32px;font-family:'Liberation Sans',sans-serif;font-size:15px;font-weight:normal;font-style:normal;color:#262626;">C</span>
<span style="left:729.00px;top:260.32px;font-family:'Liberation Sans',sans-serif;font-size:15px;font-weight:normal;font-style:normal;color:#217346;">D</span>
<span style="left:10.83px;top:286.22px;font-family:'Liberation Sans',sans-serif;font-size:15px;font-weight:normal;font-style:normal;color:#262626;">1</span>
<span style="left:10.83px;top:306.92px;font-family:'Liberation Sans',sans-serif;font-size:15px;font-weight:normal;font-style:normal;color:#262626;">2</span>
<span style="left:10.83px;top:328.92px;font-family:'Liberation Sans',sans-serif;font-size:15px;font-weight:normal;font-style:normal;color:#262626;">3</span>
<span style="left:10.83px;top:351.12px;font-family:'Liberation Sans',sans-serif;font-size:15px;font-weight:normal;font-style:normal;color:#217346;">4</span>
<span style="left:10.83px;top:370.12px;font-family:'Liberation Sans',sans-serif;font-size:15px;font-weight:normal;font-style:normal;color:#262626;">5</span>
<span style="left:10.83px;top:389.12px;font-family:'Liberation Sans',sans-serif;font-size:15px;font-weight:normal;font-style:normal;color:#262626;">6</span>
<span style="left:10.83px;top:408.12px;font-family:'Liberation Sans',sans-serif;font-size:15px;font-weight:normal;font-style:normal;color:#262626;">7</span>
<span style="left:10.83px;top:427.12px;font-family:'Liberation Sans',sans-serif;font-size:15px;font-weight:normal;font-style:normal;color:#262626;">8</span>
<span style="left:10.83px;top:446.12px;font-family:'Liberation Sans',sans-serif;font-size:15px;font-weight:normal;font-style:normal;color:#262626;">9</span>
<span style="left:6.66px;top:465.12px;font-family:'Liberation Sans',sans-serif;font-size:15px;font-weight:normal;font-style:normal;color:#262626;">10</span>
<span style="left:7.21px;top:484.12px;font-family:'Liberation Sans',sans-serif;font-size:15px;font-weight:normal;font-style:normal;color:#262626;">11</span>
<span style="left:6.66px;top:503.12px;font-family:'Liberation Sans',sans-serif;font-size:15px;font-weight:normal;font-style:normal;color:#262626;">12</span>
<span style="left:6.66px;top:522.12px;font-family:'Liberation Sans',sans-serif;font-size:15px;font-weight:normal;font-style:normal;color:#262626;">13</span>
<span style="left:47.18px;top:280.87px;font-family:'Liberation Serif',sans-serif;font-size:19px;font-weight:bold;font-style:normal;color:#006100;transform:scaleX(1.0172);transform-origin:0 0;">STT</span>
<span style="left:174.80px;top:280.87px;font-family:'Liberation Serif',sans-serif;font-size:19px;font-weight:bold;font-style:normal;color:#006100;transform:scaleX(0.9836);transform-origin:0 0;">Tên cột</span>
<span style="left:389.40px;top:280.87px;font-family:'Liberation Serif',sans-serif;font-size:19px;font-weight:bold;font-style:normal;color:#006100;">Hướng dẫn nhập</span>
<span style="left:702.18px;top:280.87px;font-family:'Liberation Serif',sans-serif;font-size:19px;font-weight:bold;font-style:normal;color:#006100;transform:scaleX(1.0098);transform-origin:0 0;">Ghi chú</span>
<span style="left:61.86px;top:305.56px;font-family:'Liberation Serif',sans-serif;font-size:17.33px;font-weight:normal;font-style:normal;color:#000;">1</span>
<span style="left:61.86px;top:327.56px;font-family:'Liberation Serif',sans-serif;font-size:17.33px;font-weight:normal;font-style:normal;color:#000;">2</span>
<span style="left:61.86px;top:349.56px;font-family:'Liberation Serif',sans-serif;font-size:17.33px;font-weight:normal;font-style:normal;color:#000;">3</span>
<span style="left:106.80px;top:305.56px;font-family:'Liberation Serif',sans-serif;font-size:17.33px;font-weight:normal;font-style:normal;color:#000;transform:scaleX(0.9504);transform-origin:0 0;">Thành tích đặc biệt</span>
<span style="left:105.64px;top:327.56px;font-family:'Liberation Serif',sans-serif;font-size:17.33px;font-weight:normal;font-style:normal;color:#000;transform:scaleX(0.9536);transform-origin:0 0;">Nội dung khen thưởng</span>
<span style="left:105.03px;top:349.56px;font-family:'Liberation Serif',sans-serif;font-size:17.33px;font-weight:normal;font-style:normal;color:#000;transform:scaleX(0.9691);transform-origin:0 0;">Đạt thành tích</span>
<span style="left:305.83px;top:305.56px;font-family:'Liberation Serif',sans-serif;font-size:17.33px;font-weight:normal;font-style:normal;color:#000;transform:scaleX(0.9661);transform-origin:0 0;">Nhập nội dung thành tích đặc biệt nếu có</span>
<span style="left:305.84px;top:327.56px;font-family:'Liberation Serif',sans-serif;font-size:17.33px;font-weight:normal;font-style:normal;color:#000;transform:scaleX(0.9572);transform-origin:0 0;">Nhập nội dung khen thưởng nếu có</span>
<span style="left:305.84px;top:349.56px;font-family:'Liberation Serif',sans-serif;font-size:17.33px;font-weight:normal;font-style:normal;color:#000;transform:scaleX(0.9627);transform-origin:0 0;">Nhập nội dung Xuất sắc hoặc vượt trội</span>
<span style="left:614.64px;top:305.56px;font-family:'Liberation Serif',sans-serif;font-size:17.33px;font-weight:normal;font-style:normal;color:#000;transform:scaleX(0.9592);transform-origin:0 0;">(Lưu ý: không vượt quá 250 ký tự)</span>
<span style="left:614.64px;top:327.56px;font-family:'Liberation Serif',sans-serif;font-size:17.33px;font-weight:normal;font-style:normal;color:#000;transform:scaleX(0.9592);transform-origin:0 0;">(Lưu ý: không vượt quá 250 ký tự)</span>
<div style="left:875px;top:257px;width:21px;height:275px;background:#e6e6e6"></div>
<div style="left:878px;top:261px;width:15px;height:270px;background:#dcdcdc"></div>
<div style="left:878px;top:261px;width:15px;height:15px;background:#fff;border:1px solid #ababab"></div>
<svg style="left:881px;top:264px;" width="9" height="9" viewBox="0 0 9 9"><path d="M0.8 6.8 L4.5 3 L8.2 6.8 Z" fill="#5f5f5f"/></svg>
<div style="left:878px;top:276px;width:15px;height:155px;background:#fff;border:1px solid #ababab"></div>
<div style="left:878px;top:518px;width:15px;height:13px;background:#fff;border:1px solid #ababab"></div>
<svg style="left:881px;top:520px;" width="9" height="9" viewBox="0 0 9 9"><path d="M0.8 2 L4.5 5.8 L8.2 2 Z" fill="#5f5f5f"/></svg>
<div style="left:1px;top:532px;width:895px;height:27px;background:#e6e6e6"></div>
<div style="left:1px;top:559px;width:895px;height:1px;background:#c6c6c6"></div>
<div style="left:101px;top:535px;width:1px;height:18px;background:#9b9b9b"></div>
<svg style="left:26px;top:538px;" width="8" height="12" viewBox="0 0 8 12"><path d="M5.5 2 L1.5 6 L5.5 10 Z" fill="#c6c6c6"/></svg>
<svg style="left:54px;top:538px;" width="8" height="12" viewBox="0 0 8 12"><path d="M2 2 L6 6 L2 10 Z" fill="#c6c6c6"/></svg>
<div style="left:166px;top:531px;width:94px;height:25px;background:#fff;border-left:1px solid #c6c6c6;border-right:1px solid #c6c6c6"></div>
<div style="left:166px;top:554px;width:94px;height:2px;background:#217346"></div>
<span style="left:113.57px;top:537.74px;font-family:'Liberation Sans',sans-serif;font-size:12px;font-weight:normal;font-style:normal;color:#444;transform:scaleX(1.0384);transform-origin:0 0;">Sheet1</span>
<span style="left:177.91px;top:537.74px;font-family:'Liberation Sans',sans-serif;font-size:12px;font-weight:bold;font-style:normal;color:#217346;transform:scaleX(1.0907);transform-origin:0 0;">Hướng dẫn</span>
<svg style="left:292px;top:537px;" width="17" height="16" viewBox="0 0 17 16"><circle cx="8.5" cy="8" r="7.2" fill="none" stroke="#6b6b6b" stroke-width="1.1"/><path d="M8.5 4.3 V11.7 M4.8 8 H12.2" stroke="#555" stroke-width="1.7"/></svg>
<svg style="left:537px;top:540px;" width="4" height="12" viewBox="0 0 4 12"><circle cx="2" cy="2" r="0.9" fill="#9a9a9a"/><circle cx="2" cy="5.5" r="0.9" fill="#9a9a9a"/><circle cx="2" cy="9" r="0.9" fill="#9a9a9a"/></svg>
<div style="left:555px;top:538px;width:320px;height:15px;background:#dcdcdc"></div>
<div style="left:555px;top:538px;width:15px;height:15px;background:#fff;border:1px solid #ababab"></div>
<svg style="left:558px;top:541px;" width="9" height="9" viewBox="0 0 9 9"><path d="M6 0.8 L2.2 4.5 L6 8.2 Z" fill="#5f5f5f"/></svg>
<div style="left:570px;top:538px;width:181px;height:15px;background:#fff;border:1px solid #ababab"></div>
<div style="left:860px;top:538px;width:15px;height:15px;background:#fff;border:1px solid #ababab"></div>
<svg style="left:863px;top:541px;" width="9" height="9" viewBox="0 0 9 9"><path d="M3 0.8 L6.8 4.5 L3 8.2 Z" fill="#5f5f5f"/></svg>
<div style="left:1px;top:560px;width:895px;height:21px;background:#f3f3f3"></div>
<span style="left:7.90px;top:562.84px;font-family:'Liberation Sans',sans-serif;font-size:12px;font-weight:normal;font-style:normal;color:#444;transform:scaleX(0.8942);transform-origin:0 0;">Ready</span>
<div style="left:590px;top:560px;width:37px;height:21px;background:#c8c8c8"></div>
<svg style="left:601px;top:562px;" width="15" height="15" viewBox="0 0 15 15"><path d="M1.5 1.5 H13.5 V13.5 H1.5 Z M1.5 5.5 H13.5 M1.5 9.5 H13.5 M5.5 1.5 V13.5 M9.5 1.5 V13.5" fill="none" stroke="#6b6b6b" stroke-width="1"/></svg>
<svg style="left:640px;top:563px;" width="15" height="14" viewBox="0 0 15 14"><rect x="1" y="1" width="13" height="12" fill="none" stroke="#666" stroke-width="1"/><rect x="3.5" y="3.5" width="8" height="7" fill="none" stroke="#666" stroke-width="1"/><path d="M5 5.5 H10 M5 7.5 H10" stroke="#666"/></svg>
<svg style="left:677px;top:562px;" width="16" height="15" viewBox="0 0 16 15"><rect x="1.5" y="1.5" width="13" height="12" fill="none" stroke="#6b6b6b" stroke-width="1"/><path d="M4.5 1.5 V7.5 H9.5 V1.5" fill="none" stroke="#6b6b6b" stroke-width="1"/></svg>
<div style="left:709px;top:569px;width:6px;height:2px;background:#444"></div>
<div style="left:720px;top:569px;width:100px;height:1px;background:#9a9a9a"></div>
<div style="left:767px;top:563px;width:5px;height:12px;background:#555"></div>
<svg style="left:822px;top:564px;" width="10" height="10" viewBox="0 0 10 10"><path d="M5 0.5 V9.5 M0.5 5 H9.5" stroke="#444" stroke-width="2"/></svg>
<span style="left:846.28px;top:562.34px;font-family:'Liberation Sans',sans-serif;font-size:12px;font-weight:normal;font-style:normal;color:#444;transform:scaleX(0.9156);transform-origin:0 0;">100 %</span>
</div></body></html>
